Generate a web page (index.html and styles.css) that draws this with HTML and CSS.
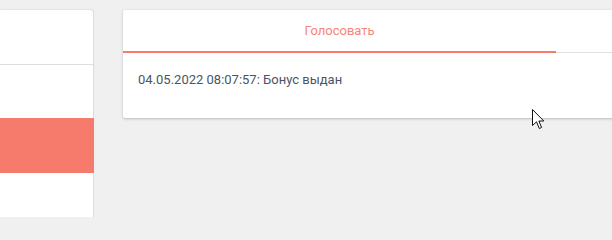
FILE: index.html
```html
<!DOCTYPE html>
<html lang="ru">
<head>
<meta charset="utf-8">
<link rel="stylesheet" href="styles.css">
</head>
<body>
<div class="page">
  <aside class="side">
    <div class="side-head"></div>
    <div class="side-gap"></div>
    <div class="side-active"></div>
  </aside>
  <section class="card">
    <div class="tabs">
      <div class="tab active">Голосовать</div>
      <div class="tab"></div>
    </div>
    <div class="card-body">04.05.2022 08:07:57: Бонус выдан</div>
  </section>
</div>
<svg class="cursor" width="13" height="21" viewBox="0 0 13 21">
  <path d="M0.5 0.5 L0.5 16.5 L4.5 12.8 L7.3 19.5 L9.6 18.5 L6.9 12 L11.8 12 Z" fill="#fff" stroke="#111" stroke-width="1" stroke-linejoin="miter"/>
</svg>
</body>
</html>
```

FILE: styles.css
```css
html, body {
  margin: 0;
  padding: 0;
  background: #f0f0f0;
  font-family: Roboto, "Noto Sans", sans-serif;
}

.page {
  width: 612px;
  height: 217px;
  box-sizing: border-box;
  overflow: hidden;
  display: flex;
  align-items: flex-start;
  gap: 30px;
  padding-top: 10px;
}

.side {
  flex: 0 0 93px;
  height: 207px;
  background: #fff;
  border-top-right-radius: 3px;
  box-shadow: 1px 0 0 #dcdcdc, 1px -1px 1px rgba(0,0,0,0.06);
  display: flex;
  flex-direction: column;
}

.side-head {
  height: 54px;
  border-bottom: 1px solid #dedede;
}

.side-gap {
  height: 53px;
}

.side-active {
  height: 55px;
  background: #f77b6d;
  margin-right: -1px;
}

.card {
  flex: 0 0 866px;
  height: 108px;
  background: #fff;
  border-radius: 2px;
  box-shadow: 0 1px 3px rgba(0,0,0,0.22), 0 0 1px rgba(0,0,0,0.08);
}

.tabs {
  display: flex;
  height: 43px;
  box-shadow: inset 0 -1px 0 #e0e0e0;
}

.tab {
  flex: 0 0 433px;
  height: 41px;
  line-height: 41px;
  text-align: center;
  font-size: 13px;
  color: #f7857a;
}

.tab.active {
  border-bottom: 2px solid #f77b6d;
}

.card-body {
  padding: 18px 15px;
  font-size: 13px;
  line-height: 18px;
  color: #4b5467;
}

.cursor {
  position: absolute;
  left: 532px;
  top: 109px;
}
```
